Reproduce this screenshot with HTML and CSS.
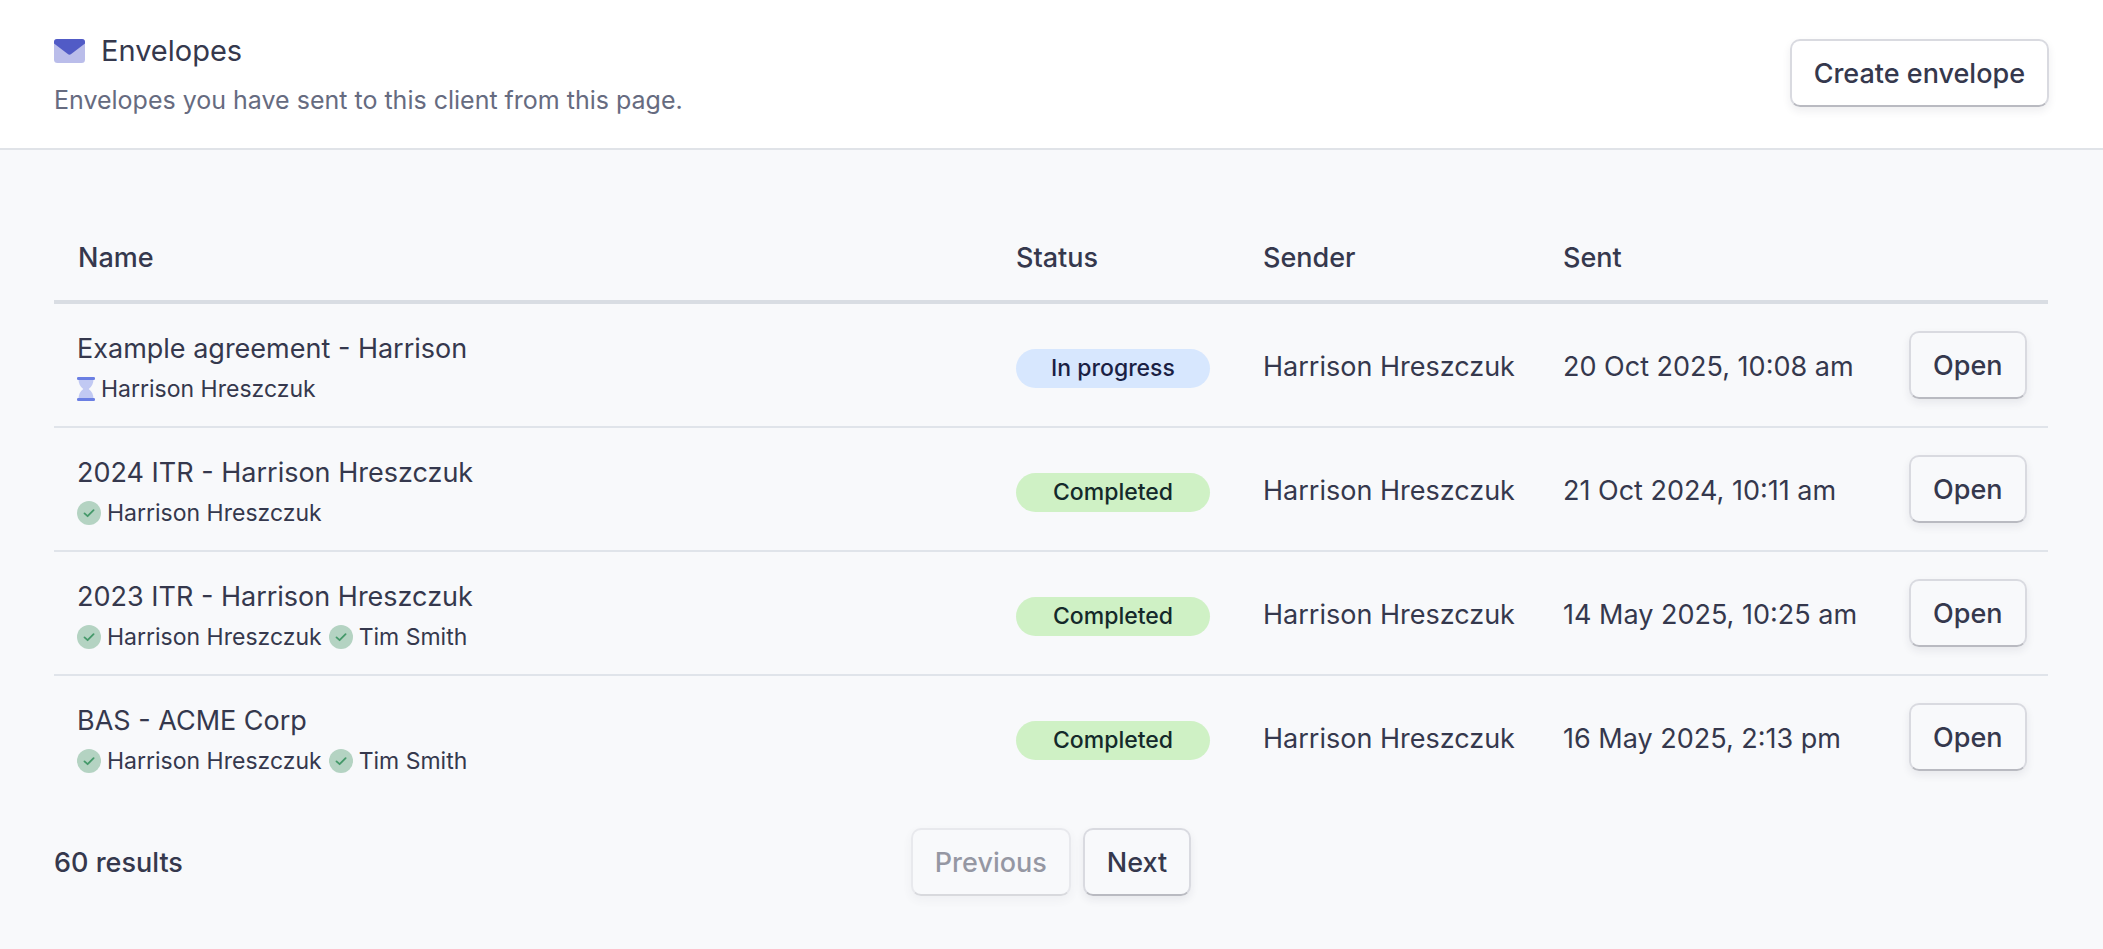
FILE: index.html
```html
<!DOCTYPE html>
<html lang="en">
<head>
<meta charset="utf-8">
<meta name="viewport" content="width=device-width, initial-scale=1">
<title>Envelopes</title>
<link rel="stylesheet" href="styles.css">
</head>
<body>
<svg class="sprite" aria-hidden="true">
  <symbol id="check" viewBox="0 0 24 24">
    <circle cx="12" cy="12" r="12" fill="#b4d3c2"/>
    <path d="M7.500 12.400 10.600 15.200 16.600 9.200" fill="none" stroke="#45996a" stroke-width="1.800" stroke-linecap="round" stroke-linejoin="round"/>
  </symbol>
  <symbol id="hourglass" viewBox="0 0 18 24">
    <path d="M1.500 2h15c0 4.500-1.500 7.300-4.800 10 3.300 2.700 4.800 5.500 4.800 10h-15c0-4.500 1.500-7.300 4.800-10C3 9.300 1.500 6.500 1.500 2Z" fill="#c1c9f3"/>
    <rect width="18" height="3" rx="1.300" fill="#6b7fe3"/>
    <rect y="21" width="18" height="3" rx="1.300" fill="#6b7fe3"/>
  </symbol>
</svg>
<header class="header">
  <div class="heading">
    <h1 class="title">
      <svg class="title-icon" viewBox="0 0 31 24" aria-hidden="true">
        <rect width="31" height="24" rx="3.500" fill="#babdea"/>
        <path d="M3 0h25a3 3 0 0 1 3 3v1.500L17.200 15.100a2.800 2.800 0 0 1-3.400 0L0 4.500V3a3 3 0 0 1 3-3Z" fill="#515bc6"/>
      </svg>
      Envelopes
    </h1>
    <p class="subtitle">Envelopes you have sent to this client from this page.</p>
  </div>
  <button class="button" type="button">Create envelope</button>
</header>
<main class="content">
  <table class="table">
    <colgroup>
      <col>
      <col class="col-status">
      <col class="col-sender">
      <col class="col-sent">
      <col class="col-action">
    </colgroup>
    <thead>
      <tr><th>Name</th><th>Status</th><th>Sender</th><th>Sent</th><td></td></tr>
    </thead>
    <tbody>
      <tr>
        <td class="cell-name">
          <div>Example agreement - Harrison</div>
          <div class="signers">
            <span class="signer"><svg class="icon-pending" aria-hidden="true"><use href="#hourglass"/></svg>Harrison Hreszczuk</span>
          </div>
        </td>
        <td class="cell-status"><span class="badge badge-progress">In progress</span></td>
        <td class="cell-text">Harrison Hreszczuk</td>
        <td class="cell-text">20 Oct 2025, 10:08 am</td>
        <td><button class="button" type="button">Open</button></td>
      </tr>
      <tr>
        <td class="cell-name">
          <div>2024 ITR - Harrison Hreszczuk</div>
          <div class="signers">
            <span class="signer"><svg class="icon-done" aria-hidden="true"><use href="#check"/></svg>Harrison Hreszczuk</span>
          </div>
        </td>
        <td class="cell-status"><span class="badge badge-completed">Completed</span></td>
        <td class="cell-text">Harrison Hreszczuk</td>
        <td class="cell-text">21 Oct 2024, 10:11 am</td>
        <td><button class="button" type="button">Open</button></td>
      </tr>
      <tr>
        <td class="cell-name">
          <div>2023 ITR - Harrison Hreszczuk</div>
          <div class="signers">
            <span class="signer"><svg class="icon-done" aria-hidden="true"><use href="#check"/></svg>Harrison Hreszczuk</span>
            <span class="signer"><svg class="icon-done" aria-hidden="true"><use href="#check"/></svg>Tim Smith</span>
          </div>
        </td>
        <td class="cell-status"><span class="badge badge-completed">Completed</span></td>
        <td class="cell-text">Harrison Hreszczuk</td>
        <td class="cell-text">14 May 2025, 10:25 am</td>
        <td><button class="button" type="button">Open</button></td>
      </tr>
      <tr>
        <td class="cell-name">
          <div>BAS - ACME Corp</div>
          <div class="signers">
            <span class="signer"><svg class="icon-done" aria-hidden="true"><use href="#check"/></svg>Harrison Hreszczuk</span>
            <span class="signer"><svg class="icon-done" aria-hidden="true"><use href="#check"/></svg>Tim Smith</span>
          </div>
        </td>
        <td class="cell-status"><span class="badge badge-completed">Completed</span></td>
        <td class="cell-text">Harrison Hreszczuk</td>
        <td class="cell-text">16 May 2025, 2:13 pm</td>
        <td><button class="button" type="button">Open</button></td>
      </tr>
    </tbody>
  </table>
  <footer class="footer">
    <p class="results">60 results</p>
    <nav class="pager" aria-label="Pagination">
      <button class="button" type="button" disabled>Previous</button>
      <button class="button" type="button">Next</button>
    </nav>
  </footer>
</main>
</body>
</html>
```

FILE: styles.css
```css
* {
  box-sizing: border-box;
}

body {
  margin: 0;
  background: #f8f9fb;
  color: #35384d;
  font-family: Inter, "Liberation Sans", sans-serif;
  font-size: 27px;
  line-height: 36px;
}

h1,
p {
  margin: 0;
}

.sprite {
  display: none;
}

.header {
  display: flex;
  align-items: center;
  justify-content: space-between;
  padding: 29px 54px 31px;
  border-bottom: 2px solid #e0e3e8;
  background: #fff;
}

.heading {
  padding-top: 2px;
}

.title {
  display: flex;
  align-items: center;
  gap: 16px;
  font-size: 29px;
  font-weight: 400;
  line-height: 40px;
}

.title-icon {
  width: 31px;
  height: 24px;
}

.subtitle {
  margin-top: 12px;
  color: #666b80;
  font-size: 25px;
  line-height: 34px;
}

.button {
  height: 68px;
  padding: 2px 22px 0;
  border: 2px solid #d9dae0;
  border-bottom-color: #b9bac1;
  border-radius: 10px;
  background: transparent;
  box-shadow: 0 4px 8px rgb(40 42 60 / 8%);
  color: inherit;
  font: inherit;
  font-weight: 500;
}

.button:disabled {
  opacity: 0.5;
}

.content {
  padding: 64px 55px 54px 54px;
}

.table {
  width: 100%;
  border-collapse: separate;
  border-spacing: 0;
  table-layout: fixed;
}

.table th,
.table td {
  padding: 0 24px;
  text-align: left;
  white-space: nowrap;
}

.table th {
  height: 90px;
  padding-top: 2px;
  font-weight: 500;
}

.table thead th,
.table thead td {
  border-bottom: 4px solid #d9dde3;
}

.table tbody td {
  height: 124px;
  border-bottom: 2px solid #e0e4ea;
}

.table tbody tr:last-child td {
  height: 122px;
  border-bottom: 0;
}

.table .cell-name {
  padding-top: 8px;
  padding-left: 23px;
}

.table .cell-status {
  padding-top: 6px;
}

.table .cell-text {
  padding-top: 4px;
}

.col-status {
  width: 247px;
}

.col-sender {
  width: 300px;
}

.col-sent {
  width: 346px;
}

.col-action {
  width: 163px;
}

.signers {
  display: flex;
  gap: 7px;
  margin-top: 4px;
  font-size: 23px;
}

.signer {
  display: flex;
  align-items: center;
  gap: 6px;
}

.icon-done {
  width: 24px;
  height: 24px;
}

.icon-pending {
  width: 18px;
  height: 24px;
}

.badge {
  display: block;
  width: 194px;
  border-radius: 20px;
  font-size: 23px;
  font-weight: 500;
  line-height: 39px;
  text-align: center;
}

.badge-progress {
  background: #d7e7fe;
  color: #1b1f44;
}

.badge-completed {
  background: #cff1c5;
  color: #14292a;
}

.footer {
  display: grid;
  grid-template-columns: 1fr auto 1fr;
  align-items: center;
  padding-top: 30px;
}

.results {
  padding-top: 2px;
  font-weight: 500;
}

.pager {
  display: flex;
  gap: 12px;
}
```
